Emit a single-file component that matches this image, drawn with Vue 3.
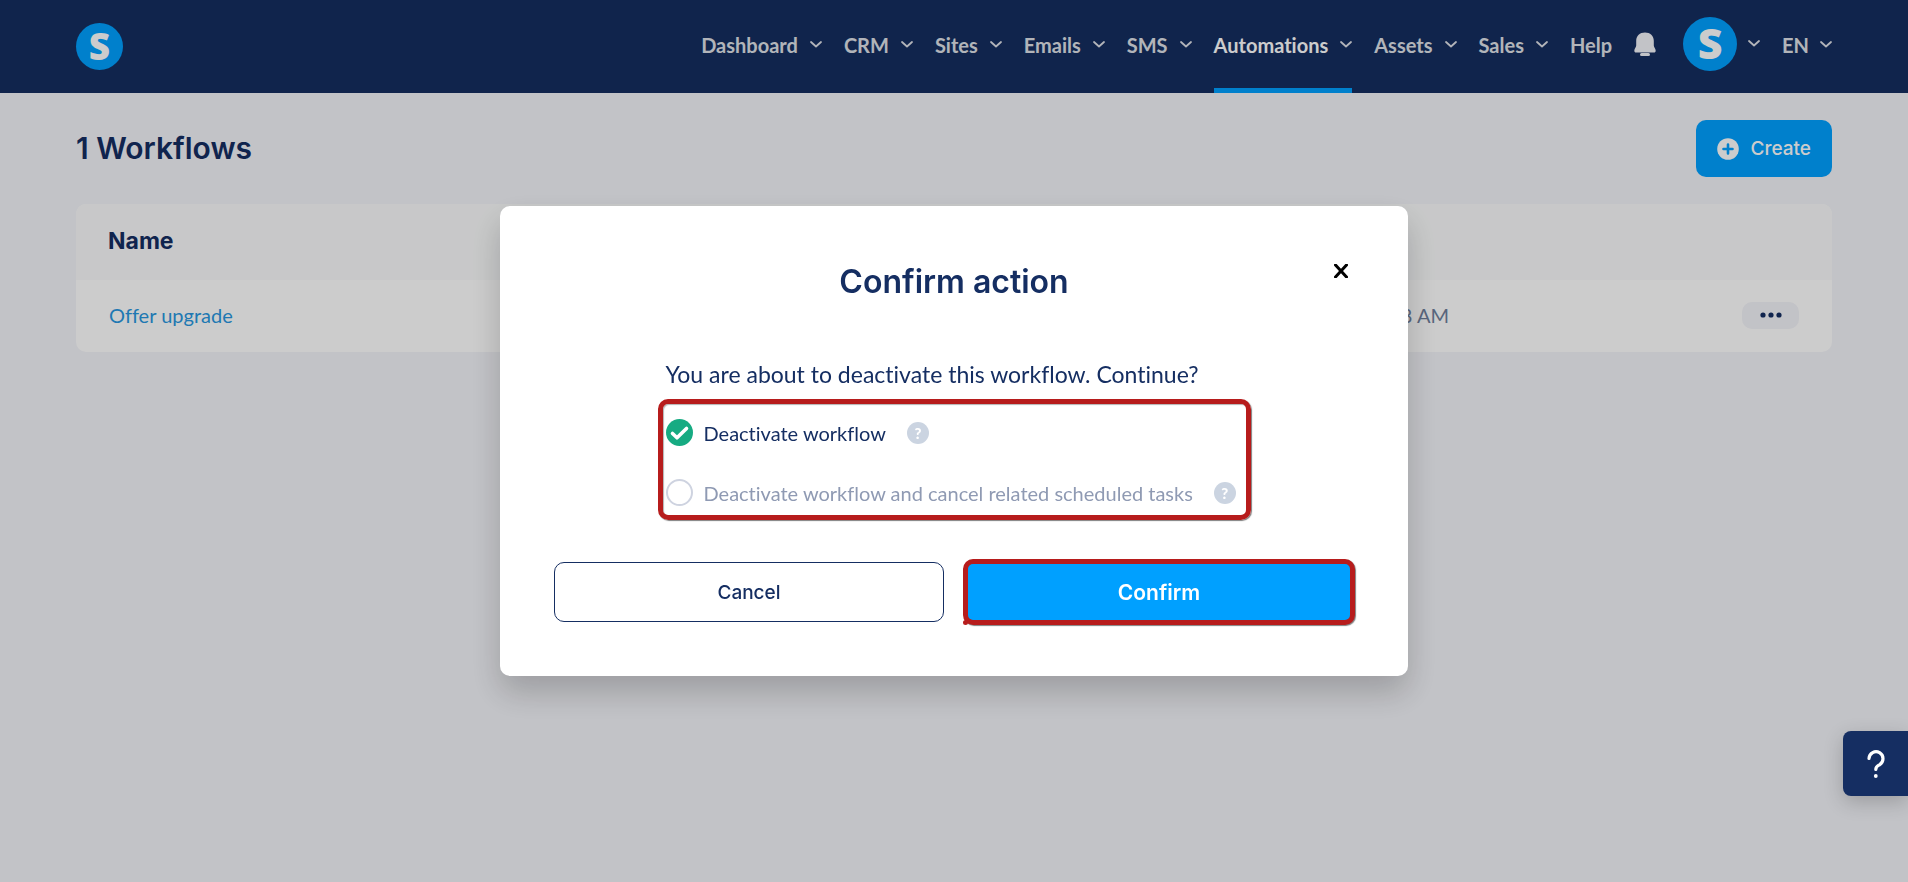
<template>
  <div class="page">
    <header class="topbar">
      <a href="#" class="logo" aria-label="Home">S</a>

      <nav class="menu">
        <a
          v-for="item in menu"
          :key="item.label"
          href="#"
          class="menu-item"
          :class="{ active: item.active }"
        >
          {{ item.label }}
          <svg v-if="item.children" class="chevron" viewBox="0 0 12 7" aria-hidden="true">
            <path d="M1 1l5 4.5L11 1" />
          </svg>
        </a>
        <button type="button" class="bell" aria-label="Notifications">
          <svg viewBox="0 0 22 24" aria-hidden="true">
            <path
              d="M11 0.5C5.8 0.5 2.2 4 2.2 8.8V13.5C2.2 15.2 0.3 16.8 0.3 18.7C0.3 19.8 1 20.5 2 20.5H20C21 20.5 21.7 19.8 21.7 18.7C21.7 16.8 19.8 15.2 19.8 13.5V8.8C19.8 4 16.2 0.5 11 0.5Z"
            />
            <rect x="6" y="21" width="10" height="3" rx="1.5" />
          </svg>
        </button>
        <button type="button" class="account" aria-label="Account">
          <span class="avatar">S</span>
          <svg class="chevron" viewBox="0 0 12 7" aria-hidden="true">
            <path d="M1 1l5 4.5L11 1" />
          </svg>
        </button>
        <button type="button" class="menu-item">
          EN
          <svg class="chevron" viewBox="0 0 12 7" aria-hidden="true">
            <path d="M1 1l5 4.5L11 1" />
          </svg>
        </button>
      </nav>
    </header>

    <main class="content">
      <div class="heading">
        <h1>1 Workflows</h1>
        <button type="button" class="create">
          <svg viewBox="0 0 22 22" aria-hidden="true">
            <circle cx="11" cy="11" r="10.8" />
            <path d="M11 6.5v9M6.5 11h9" />
          </svg>
          Create
        </button>
      </div>

      <table class="workflows">
        <thead>
          <tr>
            <th scope="col">Name</th>
            <th scope="col" class="col-date"></th>
            <th scope="col" class="col-actions"></th>
          </tr>
        </thead>
        <tbody>
          <tr>
            <td><a href="#">Offer upgrade</a></td>
            <td class="col-date">8 AM</td>
            <td class="col-actions">
              <button type="button" class="more" aria-label="More actions">
                <svg viewBox="0 0 22 6" aria-hidden="true">
                  <circle cx="3" cy="3" r="2.6" />
                  <circle cx="11" cy="3" r="2.6" />
                  <circle cx="19" cy="3" r="2.6" />
                </svg>
              </button>
            </td>
          </tr>
        </tbody>
      </table>
    </main>

    <div v-if="open" class="overlay">
      <form class="modal" role="dialog" aria-labelledby="modal-title" @submit.prevent="open = false">
        <button type="button" class="close" aria-label="Close" @click="open = false">
          <svg viewBox="0 0 14 14" aria-hidden="true">
            <path d="M1.5 1l11 12M12.5 1l-11 12" />
          </svg>
        </button>
        <h2 id="modal-title">Confirm action</h2>

        <div class="modal-body">
          <p>You are about to deactivate this workflow. Continue?</p>
          <div class="options" role="radiogroup" aria-labelledby="modal-title">
            <div v-for="option in options" :key="option.value" class="option">
              <input :id="option.value" v-model="mode" type="radio" name="mode" :value="option.value" />
              <label :for="option.value">{{ option.label }}</label>
              <button type="button" class="hint" aria-label="Hint">?</button>
            </div>
          </div>
        </div>

        <div class="modal-actions">
          <button type="button" class="cancel" @click="open = false">Cancel</button>
          <button type="submit" class="confirm">Confirm</button>
        </div>
      </form>
    </div>

    <button type="button" class="help" aria-label="Help center">
      <svg viewBox="0 0 18 30" aria-hidden="true">
        <path d="M2 9.5a7 7 0 1 1 10.5 6.3C10 17.2 8.8 17.5 8.8 20.5" />
        <circle cx="8.8" cy="27" r="1.9" />
      </svg>
    </button>
  </div>
</template>

<script setup>
import { ref } from 'vue';

const open = ref(true);
const mode = ref('deactivate');

const menu = [
  { label: 'Dashboard', children: true },
  { label: 'CRM', children: true },
  { label: 'Sites', children: true },
  { label: 'Emails', children: true },
  { label: 'SMS', children: true },
  { label: 'Automations', children: true, active: true },
  { label: 'Assets', children: true },
  { label: 'Sales', children: true },
  { label: 'Help' },
];

const options = [
  { value: 'deactivate', label: 'Deactivate workflow' },
  { value: 'cancel-tasks', label: 'Deactivate workflow and cancel related scheduled tasks' },
];
</script>

<style>
body {
  margin: 0;
  background: #f3f4f9;
}
</style>

<style scoped>
.page {
  min-height: 100vh;
  font-family: Lato, sans-serif;
  font-size: 20px;
  font-variant-ligatures: none;
  color: #152e62;
}

button {
  padding: 0;
  border: 0;
  background: none;
  font: inherit;
  color: inherit;
  cursor: pointer;
}

a {
  color: inherit;
  text-decoration: none;
}

svg {
  display: block;
}

/* Top bar */
.topbar {
  display: flex;
  align-items: center;
  justify-content: space-between;
  height: 93px;
  padding: 0 76px;
  background: #152d60;
}

.logo,
.avatar {
  border-radius: 50%;
  background: #00a0ff;
  font-family: 'Open Sans', sans-serif;
  font-weight: 800;
  text-align: center;
  color: #ffffff;
}

.logo {
  width: 47px;
  height: 47px;
  font-size: 37px;
  line-height: 45px;
}

.avatar {
  width: 54px;
  height: 54px;
  font-size: 43px;
  line-height: 52px;
}

.menu {
  display: flex;
  align-items: stretch;
  gap: 22px;
  height: 100%;
}

.menu-item {
  display: flex;
  align-items: center;
  gap: 12px;
  box-sizing: border-box;
  border-top: 2px solid transparent;
  border-bottom: 5px solid transparent;
  font-size: 20px;
  font-weight: 700;
  color: #dfe2e8;
}

.menu-item.active {
  border-bottom-color: #00a0ff;
  color: #ffffff;
}

button.menu-item {
  gap: 11px;
}

.chevron {
  width: 12px;
  height: 7px;
  margin-bottom: 2px;
  fill: none;
  stroke: #dfe2e8;
  stroke-width: 1.8;
  stroke-linecap: round;
  stroke-linejoin: round;
}

.bell,
.account {
  display: flex;
  align-items: center;
  padding-bottom: 5px;
}

.bell svg {
  width: 22px;
  height: 24px;
  fill: #f3f4f9;
}

.account {
  gap: 11px;
  padding-left: 5px;
}

/* Workflow list */
.content {
  padding: 27px 76px;
}

.heading {
  display: flex;
  align-items: center;
  justify-content: space-between;
  margin-bottom: 27px;
}

h1 {
  margin: 0 0 2px;
  font-family: Inter, sans-serif;
  font-size: 30px;
  font-weight: 600;
}

.create {
  display: flex;
  align-items: center;
  gap: 12px;
  height: 57px;
  padding: 0 21px;
  border-radius: 10px;
  background: #00a0ff;
  font-family: Inter, sans-serif;
  font-size: 19px;
  font-weight: 500;
  color: #ffffff;
}

.create svg {
  width: 22px;
  height: 22px;
  fill: #ffffff;
}

.create path {
  stroke: #00a0ff;
  stroke-width: 2.6;
  stroke-linecap: round;
}

.workflows {
  width: 100%;
  border-spacing: 0;
  border-radius: 10px;
  overflow: hidden;
  background: #ffffff;
}

th {
  height: 74px;
  padding: 0 32px 2px;
  background: #fafbfc;
  font-family: Inter, sans-serif;
  font-size: 23px;
  font-weight: 700;
  text-align: left;
}

td {
  height: 70px;
  padding: 0 33px 2px;
}

td a {
  color: #2897e0;
}

.col-date {
  padding-right: 0;
  text-align: right;
  color: #6f7f9c;
}

.col-actions {
  width: 317px;
}

.more {
  display: flex;
  align-items: center;
  justify-content: center;
  width: 57px;
  height: 27px;
  margin-left: auto;
  border-radius: 10px;
  background: #f3f4f9;
}

.more svg {
  width: 22px;
  height: 6px;
  fill: #152e62;
}

/* Modal */
.overlay {
  position: fixed;
  inset: 0;
  display: flex;
  align-items: center;
  justify-content: center;
  background: rgba(0, 0, 0, 0.2);
}

.modal {
  position: relative;
  box-sizing: border-box;
  width: 100%;
  max-width: 908px;
  padding: 54px 54px 51px;
  border-radius: 10px;
  background: #ffffff;
  box-shadow: 0 16px 32px rgba(0, 0, 0, 0.2);
}

.close {
  position: absolute;
  top: 54px;
  right: 56px;
  padding: 4px;
  color: #000000;
}

.close svg {
  width: 14px;
  height: 14px;
  stroke: currentColor;
  stroke-width: 3;
  stroke-linecap: round;
}

h2 {
  margin: 0 0 54px;
  font-family: Inter, sans-serif;
  font-size: 32px;
  font-weight: 600;
  line-height: 44px;
  text-align: center;
}

.modal-body {
  max-width: 593px;
  margin: 0 auto 39px;
}

.modal-body p {
  margin: 0 0 9px;
  padding-left: 8px;
  font-size: 23px;
  line-height: 32px;
}

.options {
  display: flex;
  flex-direction: column;
  gap: 33px;
  padding: 15px 3px 9px;
  border: 5px solid #b71c1c;
  border-radius: 10px;
  box-shadow: 1px 1px 1px rgba(0, 0, 0, 0.5), inset 1px 1px 1px rgba(0, 0, 0, 0.3);
}

.option {
  display: flex;
  align-items: center;
  height: 27px;
}

.option input {
  appearance: none;
  width: 27px;
  height: 27px;
  margin: 0 11px 0 0;
  border: 2px solid #ced3e0;
  border-radius: 50%;
}

.option input:checked {
  border: 0;
  background: #16ab82
    url("data:image/svg+xml,%3Csvg xmlns='http://www.w3.org/2000/svg' fill='none' viewBox='0 0 27 27'%3E%3Cpath stroke='white' stroke-width='3.6' stroke-linecap='round' stroke-linejoin='round' d='M6.5 14.5l4.5 4.3L20.5 9.5'/%3E%3C/svg%3E")
    center / 27px no-repeat;
}

.option label {
  font-size: 20px;
  color: #8f9ab3;
}

.option input:checked + label {
  color: #152e62;
}

.hint {
  width: 22px;
  height: 22px;
  margin-left: 21px;
  border-radius: 50%;
  background: #cbd4e1;
  font-size: 15px;
  font-weight: 900;
  line-height: 22px;
  color: #ffffff;
}

.modal-actions {
  display: grid;
  grid-template-columns: 1fr 1fr;
  align-items: center;
  gap: 20px;
  font-family: Inter, sans-serif;
}

.cancel {
  height: 60px;
  border: 1px solid #152e62;
  border-radius: 10px;
  font-size: 19px;
  font-weight: 500;
}

.confirm {
  position: relative;
  height: 66px;
  margin: 0 -1px;
  border: 5px solid #b71c1c;
  border-radius: 10px;
  background: #00a0ff;
  box-shadow: 1px 1px 1px rgba(0, 0, 0, 0.5);
  font-size: 21px;
  font-weight: 600;
  color: #ffffff;
}

.confirm::before {
  content: '';
  position: absolute;
  bottom: -5px;
  left: -5px;
  width: 5px;
  height: 5px;
  border-radius: 50%;
  background: #b71c1c;
}

/* Help widget */
.help {
  position: fixed;
  right: 0;
  bottom: 86px;
  display: flex;
  align-items: center;
  justify-content: center;
  width: 65px;
  height: 65px;
  border-radius: 8px 0 0 8px;
  background: #152e62;
  box-shadow: 0 6px 20px rgba(0, 0, 0, 0.2);
}

.help svg {
  width: 18px;
  height: 30px;
  fill: none;
  stroke: #ffffff;
  stroke-width: 3.2;
  stroke-linecap: round;
}

.help circle {
  fill: #ffffff;
  stroke: none;
}
</style>
